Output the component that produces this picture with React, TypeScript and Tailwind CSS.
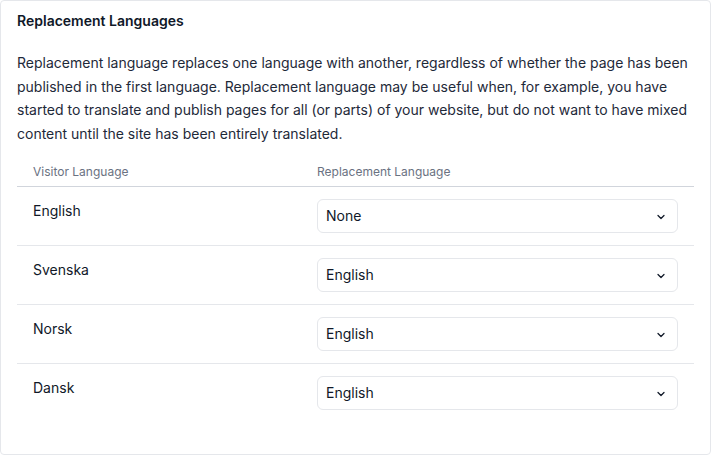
import { ChevronDown } from "lucide-react";

const rows = [
  { visitor: "English", replacement: "None" },
  { visitor: "Svenska", replacement: "English" },
  { visitor: "Norsk", replacement: "English" },
  { visitor: "Dansk", replacement: "English" },
];

const options = ["None", "English", "Svenska", "Norsk", "Dansk"];

export default function App() {
  return (
    <div className="w-[711px] h-[455px] bg-white" style={{ fontFamily: "Inter, 'Noto Sans', sans-serif" }}>
      <div className="h-full border border-gray-200 rounded-[4px] px-4 pt-[10px]">
        <h2 className="text-sm leading-5 font-semibold text-gray-900">Replacement Languages</h2>
        <p className="mt-5 text-sm leading-[23.7px] text-gray-800">
          Replacement language replaces one language with another, regardless of whether the page has been published in the first language. Replacement language may be useful when, for example, you have started to translate and publish pages for all (or parts) of your website, but do not want to have mixed content until the site has been entirely translated.
        </p>

        <table className="w-full mt-[10px] border-collapse">
          <thead>
            <tr className="border-b border-gray-300">
              <th className="w-[284px] px-4 pt-2 pb-[6px] text-left text-xs leading-4 font-normal text-gray-500">Visitor Language</th>
              <th className="px-4 pt-2 pb-[6px] text-left text-xs leading-4 font-normal text-gray-500">Replacement Language</th>
            </tr>
          </thead>
          <tbody>
            {rows.map((r, i) => (
              <tr key={r.visitor} className={i < rows.length - 1 ? "border-b border-gray-200" : ""}>
                <td className="px-4 py-3 align-top text-sm leading-6 text-gray-900">{r.visitor}</td>
                <td className="px-4 py-3 align-top">
                  <div className="relative">
                    <select
                      defaultValue={r.replacement}
                      className="w-full h-[34px] appearance-none border border-gray-200 rounded-md bg-white pl-2 pr-8 text-sm text-gray-900 outline-none"
                    >
                      {options.map((o) => (
                        <option key={o}>{o}</option>
                      ))}
                    </select>
                    <ChevronDown className="absolute right-[11px] top-[12px] w-[12px] h-[12px] text-gray-900 pointer-events-none" strokeWidth={2.5} />
                  </div>
                </td>
              </tr>
            ))}
          </tbody>
        </table>
      </div>
    </div>
  );
}
